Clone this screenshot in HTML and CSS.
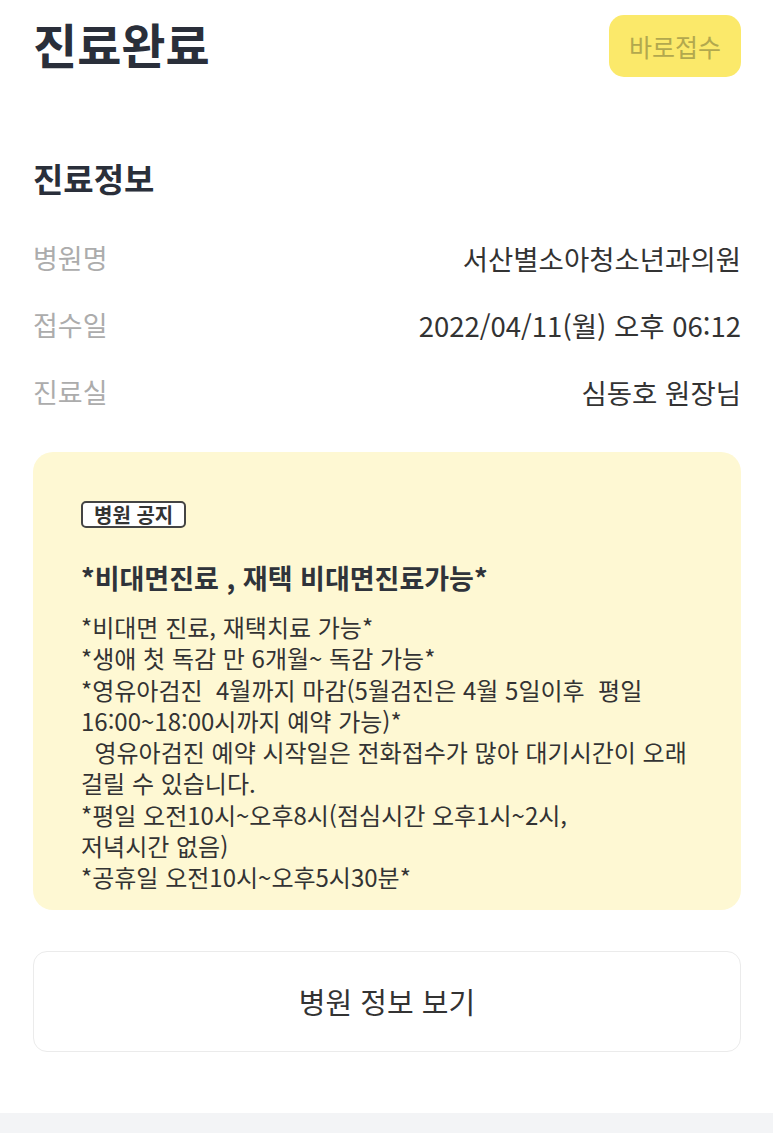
FILE: index.html
```html
<!DOCTYPE html>
<html lang="ko">
<head>
<meta charset="utf-8">
<title>진료완료</title>
<link rel="stylesheet" href="styles.css">
</head>
<body>
<div class="page">
  <header class="header">
    <h1 class="title">진료완료</h1>
    <button class="quick-btn">바로접수</button>
  </header>

  <h2 class="section-title">진료정보</h2>
  <dl class="info">
    <div class="row"><dt>병원명</dt><dd>서산별소아청소년과의원</dd></div>
    <div class="row"><dt>접수일</dt><dd>2022/04/11(월) 오후 06:12</dd></div>
    <div class="row"><dt>진료실</dt><dd>심동호 원장님</dd></div>
  </dl>

  <section class="notice">
    <span class="badge">병원 공지</span>
    <h3 class="notice-title">*비대면진료 , 재택 비대면진료가능*</h3>
    <p class="notice-body">*비대면 진료, 재택치료 가능*
*생애 첫 독감 만 6개월~ 독감 가능*
*영유아검진  4월까지 마감(5월검진은 4월 5일이후  평일
16:00~18:00시까지 예약 가능)*
  영유아검진 예약 시작일은 전화접수가 많아 대기시간이 오래
걸릴 수 있습니다.
*평일 오전10시~오후8시(점심시간 오후1시~2시,
저녁시간 없음)
*공휴일 오전10시~오후5시30분*</p>
  </section>

  <button class="info-btn">병원 정보 보기</button>
</div>
<div class="divider"></div>
</body>
</html>
```
FILE: styles.css
```css
* { box-sizing: border-box; }
html, body {
  margin: 0;
  padding: 0;
  background: #ffffff;
}
body {
  font-family: "Noto Sans CJK KR", "Noto Sans", sans-serif;
  color: #333333;
}
.page {
  padding: 15px 32px 0 33px;
}
.header {
  display: flex;
  justify-content: space-between;
  align-items: flex-start;
}
.title {
  margin: 0;
  font-size: 48px;
  line-height: 56px;
  font-weight: 700;
  color: #2a2f3a;
}
.quick-btn {
  width: 132px;
  height: 62px;
  border: none;
  border-radius: 15px;
  background: #fbe96a;
  color: #b2a84e;
  font-family: inherit;
  font-size: 25px;
  padding: 0;
}
.section-title {
  margin: 81px 0 0;
  font-size: 33px;
  line-height: 40px;
  font-weight: 700;
  color: #2a2f3a;
}
.info {
  margin: 26px 0 0;
}
.row {
  display: flex;
  justify-content: space-between;
  align-items: center;
  height: 67px;
}
.row dt {
  font-size: 27px;
  color: #acacac;
}
.row dd {
  margin: 0;
  font-size: 27.5px;
  color: #333333;
}
.notice {
  margin-top: 27px;
  background: #fef8d3;
  border-radius: 20px;
  padding: 49px 20px 17px 48px;
}
.badge {
  display: inline-block;
  height: 27px;
  line-height: 23px;
  padding: 0 11px;
  border: 2px solid #444444;
  border-radius: 5px;
  font-size: 20px;
  font-weight: 700;
  color: #333333;
  background: #ffffff;
  vertical-align: top;
}
.notice-title {
  margin: 33px 0 0;
  font-size: 27px;
  line-height: 34px;
  font-weight: 700;
  color: #2f333a;
}
.notice-body {
  margin: 16px 0 0;
  font-size: 24px;
  line-height: 31.3px;
  white-space: pre-wrap;
  color: #333333;
}
.info-btn {
  display: block;
  width: 100%;
  height: 101px;
  margin-top: 41px;
  background: #ffffff;
  border: 1.5px solid #ebebeb;
  border-radius: 14px;
  font-family: inherit;
  font-size: 29px;
  color: #333333;
  padding: 0;
}
.divider {
  margin-top: 61px;
  height: 20px;
  background: #f3f4f6;
}
```
